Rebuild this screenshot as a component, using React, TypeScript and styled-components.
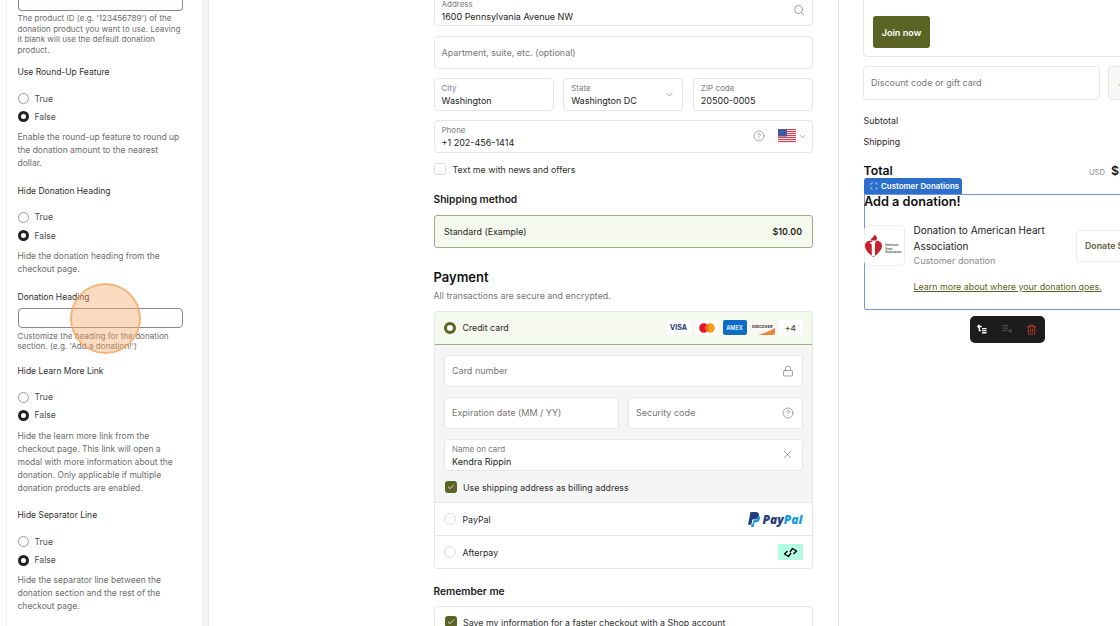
import React from "react";
import styled, { createGlobalStyle } from "styled-components";
import { Check, ChevronDown, CircleHelp, Lock, Scan, Search, Trash2, X } from "lucide-react";

const Colors = {
  olive: "#5a6324",
  tint: "#f5f8ec",
  tintBorder: "#a6a88c",
  line: "#e6e6e6",
  text: "#1f1f1f",
  muted: "#767676",
  blue: "#2c6ecb",
};

const GlobalStyle = createGlobalStyle`
  html, body {
    margin: 0;
    padding: 0;
    height: 100%;
    overflow: hidden;
    background: #fff;
  }
  body {
    font-family: Inter, "Liberation Sans", sans-serif;
    color: ${Colors.text};
  }
  * {
    box-sizing: border-box;
  }
`;

const Page = styled.div`
  position: relative;
  display: flex;
  width: 1120px;
  height: 626px;
  overflow: hidden;
  background: #fff;
`;

/* ---------- left settings panel ---------- */

const Sidebar = styled.aside`
  flex: 0 0 209px;
  height: 626px;
  padding-left: 6px;
  border-right: 1px solid #e8e8e8;
`;

const SidebarScroll = styled.div`
  height: 100%;
  padding-right: 6px;
  background: #f3f3f3;
`;

const SidebarPanel = styled.div`
  height: 100%;
  padding: 0 19.5px 0 10.5px;
  background: #fff;
  border-left: 1px solid #eeeeee;
`;

const Section = styled.section<{ $pad?: number }>`
  padding-bottom: ${(p) => p.$pad ?? 13.75}px;
`;

const SettingLabel = styled.div`
  font-size: 8.5px;
  line-height: 14px;
  color: #303030;
  margin-bottom: 10.5px;
`;

const HeadingLabel = styled(SettingLabel)`
  margin-bottom: 4.5px;
`;

const RadioRow = styled.div`
  display: flex;
  align-items: center;
  gap: 5.5px;
  height: 18.25px;
  font-size: 8.6px;
  color: #4a4a4a;
`;

const RadioDot = styled.span<{ $on?: boolean }>`
  width: 11px;
  height: 11px;
  margin-left: 0.5px;
  border-radius: 50%;
  background: #fff;
  border: ${(p) => (p.$on ? "3px solid #222" : "1px solid #999")};
`;

const Help = styled.p`
  margin: 5px 0 0;
  font-size: 8.5px;
  line-height: 13px;
  color: #6d6d6d;
`;

const SmallHelp = styled.p`
  margin: 2.5px 0 0;
  font-size: 8.1px;
  line-height: 10.5px;
  color: #6d6d6d;
`;

const SettingInput = styled.div<{ $cut?: boolean }>`
  height: ${(p) => (p.$cut ? "10.5px" : "20px")};
  background: #fdfdfd;
  border: 1px solid #8a8a8a;
  border-top-width: ${(p) => (p.$cut ? "0" : "1px")};
  border-radius: ${(p) => (p.$cut ? "0 0 4px 4px" : "4px")};
`;

const CursorHalo = styled.div`
  position: absolute;
  left: 70px;
  top: 283px;
  width: 71px;
  height: 71px;
  border-radius: 50%;
  background: rgba(250, 165, 100, 0.4);
  border: 2px solid rgba(240, 165, 95, 0.7);
`;

const BoolSetting = ({ label, help }: { label: string; help: string }) => (
  <Section>
    <SettingLabel>{label}</SettingLabel>
    <RadioRow>
      <RadioDot />
      True
    </RadioRow>
    <RadioRow>
      <RadioDot $on />
      False
    </RadioRow>
    <Help>{help}</Help>
  </Section>
);

/* ---------- checkout column ---------- */

const Main = styled.main`
  flex: 0 0 630px;
  height: 626px;
  padding: 0 25px 0 224.5px;
  border-right: 1px solid #e8e8e8;
`;

const Stack = styled.div`
  display: flex;
  flex-direction: column;
  margin-top: -6.5px;
`;

const Field = styled.div<{ $h?: number; $grow?: boolean }>`
  display: flex;
  align-items: center;
  justify-content: space-between;
  height: ${(p) => p.$h ?? 32.5}px;
  flex: ${(p) => (p.$grow ? "1 1 0" : "none")};
  min-width: 0;
  padding: 0 7.5px 0 7px;
  background: #fff;
  border: 1px solid ${Colors.line};
  border-radius: 4px;
`;

const FieldText = styled.div`
  display: flex;
  flex-direction: column;
  min-width: 0;
  padding-top: 1.5px;
`;

const FloatLabel = styled.span`
  font-size: 8px;
  line-height: 11px;
  color: #7d7d7d;
`;

const FieldValue = styled.span`
  font-size: 9px;
  line-height: 13px;
  color: #222;
  white-space: nowrap;
`;

const Placeholder = styled.span`
  font-size: 9px;
  color: #767676;
  white-space: nowrap;
`;

const FieldRow = styled.div<{ $mt?: number }>`
  display: flex;
  gap: 9.5px;
  margin-top: ${(p) => p.$mt ?? 9.5}px;
`;

const FieldIcons = styled.div`
  display: flex;
  align-items: center;
  color: #707070;
`;

const PhoneIcons = styled(FieldIcons)`
  margin-right: -2px;
`;

const FlagSlot = styled.span`
  display: flex;
  margin: 0 2px 0 12.5px;
`;

const CheckRow = styled.div<{ $mt: number }>`
  display: flex;
  align-items: center;
  gap: 6.5px;
  height: 14px;
  margin-top: ${(p) => p.$mt}px;
  font-size: 8.85px;
  color: #303030;
  white-space: nowrap;
`;

const CheckBox = styled.span<{ $on?: boolean }>`
  display: flex;
  align-items: center;
  justify-content: center;
  flex: none;
  width: 12px;
  height: 12px;
  margin-left: 0.5px;
  border-radius: 2.5px;
  color: #fff;
  background: ${(p) => (p.$on ? Colors.olive : "#fff")};
  border: 1px solid ${(p) => (p.$on ? Colors.olive : "#dcdcdc")};
`;

const SubHeading = styled.h3<{ $mt: number }>`
  margin: ${(p) => p.$mt}px 0 0;
  font-size: 10.2px;
  line-height: 14px;
  font-weight: 600;
  color: #1a1a1a;
`;

const Heading = styled.h2`
  margin: 20px 0 0;
  font-size: 13px;
  line-height: 18px;
  font-weight: 600;
  color: #111;
`;

const SubText = styled.p`
  margin: 3px 0 0;
  font-size: 8.9px;
  line-height: 14px;
  color: #767676;
`;

const ShipOption = styled.div`
  display: flex;
  align-items: center;
  justify-content: space-between;
  height: 33px;
  margin-top: 9px;
  padding: 0 10px 0 9.5px;
  font-size: 8.9px;
  background: ${Colors.tint};
  border: 1px solid ${Colors.tintBorder};
  border-radius: 3px;
`;

const Price = styled.span`
  font-weight: 600;
`;

const PaymentBox = styled.div`
  margin-top: 8px;
  border: 1px solid ${Colors.line};
  border-radius: 4px;
  overflow: hidden;
`;

const PayRow = styled.div<{ $active?: boolean }>`
  display: flex;
  align-items: center;
  gap: 6.5px;
  height: ${(p) => (p.$active ? "34px" : "33px")};
  padding: 0 9.5px;
  font-size: 8.8px;
  color: #2a2a2a;
  background: ${(p) => (p.$active ? Colors.tint : "#fff")};
  border: ${(p) => (p.$active ? `1px solid ${Colors.tintBorder}` : "none")};
  border-top: ${(p) => (p.$active ? "none" : `1px solid ${Colors.line}`)};
  margin: ${(p) => (p.$active ? "-1px -1px 0" : "0")};
  border-radius: ${(p) => (p.$active ? "3px 3px 0 0" : "0")};
`;

const PayRadio = styled.span<{ $on?: boolean }>`
  flex: none;
  width: 12px;
  height: 12px;
  border-radius: 50%;
  background: #fff;
  border: ${(p) => (p.$on ? `3.5px solid ${Colors.olive}` : "1px solid #dedede")};
`;

const PayName = styled.span`
  flex: 1;
`;

const CardForm = styled.div`
  padding: 9.5px 9.5px 0;
  height: 157px;
  background: #f5f5f5;
`;

const Badges = styled.div`
  display: flex;
  gap: 4px;
`;

const Badge = styled.span<{ $bg?: string }>`
  display: flex;
  align-items: center;
  justify-content: center;
  width: 24px;
  height: 15px;
  overflow: hidden;
  border-radius: 2px;
  background: ${(p) => p.$bg ?? "#fff"};
`;

const BadgeText = styled.span<{ $color: string; $size: number }>`
  font-size: ${(p) => p.$size}px;
  font-weight: 700;
  color: ${(p) => p.$color};
  white-space: nowrap;
`;

const PayPalLogo = styled.span`
  display: flex;
  align-items: center;
  gap: 3px;
`;

const PayPalWord = styled.span`
  font-family: "Open Sans", sans-serif;
  font-size: 12px;
  font-weight: 800;
  font-style: italic;
  color: #253b80;
`;

const PayPalPal = styled.span`
  color: #179bd7;
`;

const AfterpayBadge = styled.span`
  display: flex;
  align-items: center;
  justify-content: center;
  width: 25px;
  height: 16px;
  border-radius: 2px;
  background: #b2fce4;
`;

const RememberBox = styled.div`
  height: 60px;
  margin-top: 8px;
  padding: 8px 9.5px;
  border: 1px solid ${Colors.line};
  border-radius: 4px;
`;

/* ---------- order summary column ---------- */

const Summary = styled.aside`
  flex: none;
  width: 291px;
  margin-left: 24px;
  margin-top: -10px;
`;

const PromoCard = styled.div`
  height: 67px;
  padding: 25px 9px 0;
  border: 1px solid ${Colors.line};
  border-radius: 4px;
`;

const JoinButton = styled.button`
  display: block;
  width: 57px;
  height: 32px;
  padding: 0;
  font: 600 9.1px Inter, sans-serif;
  color: #fff;
  background: ${Colors.olive};
  border: none;
  border-radius: 3px;
`;

const DiscountRow = styled.div`
  display: flex;
  gap: 8px;
  margin-top: 9px;
`;

const DiscountInput = styled(Field)`
  flex: 0 0 237px;
  height: 33.5px;
`;

const ApplyButton = styled.div`
  flex: 1;
  display: flex;
  align-items: center;
  padding-left: 10px;
  font-size: 9px;
  color: #8a8a8a;
  background: #f7f7f7;
  border: 1px solid ${Colors.line};
  border-radius: 4px;
`;

const LineItem = styled.div<{ $mt: number }>`
  display: flex;
  justify-content: space-between;
  height: 14px;
  line-height: 14px;
  margin-top: ${(p) => p.$mt}px;
  padding-left: 0.5px;
  font-size: 8.9px;
  color: #2a2a2a;
`;

const TotalRow = styled.div`
  display: flex;
  align-items: baseline;
  justify-content: space-between;
  height: 14px;
  margin-top: 15px;
  padding-left: 0.5px;
  font-size: 12.3px;
  line-height: 14px;
  font-weight: 600;
  color: #111;
`;

const TotalValue = styled.span`
  display: flex;
  align-items: baseline;
  gap: 6px;
`;

const Currency = styled.span`
  font-size: 7.6px;
  font-weight: 400;
  color: #8a8a8a;
`;

const BlockTab = styled.div`
  display: flex;
  align-items: center;
  gap: 3.5px;
  width: 98px;
  height: 16px;
  margin-left: 1px;
  padding-left: 5.5px;
  font-size: 7.9px;
  font-weight: 600;
  color: #fff;
  white-space: nowrap;
  background: ${Colors.blue};
  border-radius: 3px 3px 0 0;
`;

const DonationBox = styled.div`
  height: 116px;
  margin-left: 1px;
  border: 1.5px solid #6d9ad6;
  border-radius: 0 0 0 2px;
`;

const DonationTitle = styled.h3`
  margin: 0;
  font-size: 12.7px;
  line-height: 13px;
  font-weight: 600;
  color: #111;
  white-space: nowrap;
  margin-left: -1px;
`;

const DonationRow = styled.div`
  display: flex;
  align-items: center;
  gap: 9px;
  margin-top: 16px;
  margin-left: -1.5px;
`;

const LogoFrame = styled.div`
  flex: none;
  width: 41px;
  height: 41px;
  display: flex;
  align-items: center;
  background: #fff;
  border: 1px solid #eeeeee;
  border-radius: 5px;
`;

const DonationInfo = styled.div`
  flex: 0 0 153px;
  margin-top: -2px;
`;

const DonationName = styled.div`
  font-size: 10px;
  line-height: 16px;
  color: #222;
`;

const DonationMeta = styled.div`
  font-size: 9.1px;
  line-height: 14px;
  color: #8a8a8a;
`;

const DonateButton = styled.div`
  flex: none;
  width: 90px;
  height: 32px;
  display: flex;
  align-items: center;
  padding-left: 8.5px;
  font-size: 8.8px;
  font-weight: 600;
  color: #5d6342;
  background: #fff;
  border: 1px solid #ececec;
  border-radius: 3px;
  white-space: nowrap;
`;

const LearnMore = styled.a`
  display: block;
  margin: 12.5px 0 0 48.5px;
  font-size: 8.85px;
  line-height: 13px;
  color: ${Colors.olive};
  text-decoration: underline;
  white-space: nowrap;
`;

const Toolbar = styled.div`
  display: flex;
  align-items: center;
  justify-content: center;
  gap: 14.5px;
  width: 75px;
  height: 27px;
  margin: 6px 0 0 106.5px;
  background: #1c1c1c;
  border-radius: 5px;
`;

/* ---------- drawings ---------- */

const FlagIcon = () => (
  <svg width="18" height="14" viewBox="0 0 18 14">
    {[0, 1, 2, 3, 4, 5, 6].map((i) => (
      <rect key={i} y={i * 2} width="18" height="1" fill="#d9414f" />
    ))}
    {[0, 1, 2, 3, 4, 5, 6].map((i) => (
      <rect key={i} y={i * 2 + 1} width="18" height="1" fill="#f6e4e6" />
    ))}
    <rect width="9" height="7.5" fill="#3f5a9c" />
  </svg>
);

const MastercardIcon = () => (
  <svg width="16" height="10" viewBox="0 0 16 10">
    <circle cx="5" cy="5" r="4.8" fill="#e0162b" />
    <circle cx="11" cy="5" r="4.8" fill="#f79e1b" />
    <path d="M8 1.3a4.8 4.8 0 0 1 0 7.4a4.8 4.8 0 0 1 0-7.4z" fill="#f2641f" />
  </svg>
);

const DiscoverBadge = () => (
  <Badge>
    <svg width="24" height="15" viewBox="0 0 24 15">
      <rect width="24" height="15" fill="#fbf7f2" />
      <path d="M7 15C14 13 20 10.5 24 8v7z" fill="#e8853a" />
      <text x="1" y="7.5" fontSize="4" fontWeight="700" fill="#3a3433" fontFamily="Inter, sans-serif">
        DISCOVER
      </text>
    </svg>
  </Badge>
);

const PayPalMark = () => (
  <svg width="12" height="15" viewBox="0 0 12 15">
    <path d="M2.5 0h5C10.3 0 11.4 1.6 11 3.6 10.5 6.4 8.6 7.6 6 7.6H4.3l-.9 5.2H0z" fill="#253b80" />
    <path d="M10.6 3.6c1.2.7 1.6 1.9 1.3 3.3-.5 2.4-2.1 3.4-4.3 3.4h-1l-.8 4.7H3l.4-2.2h1l.9-4.6H6c2.8 0 4.3-1.9 4.6-4.6z" fill="#179bd7" />
  </svg>
);

const AfterpayMark = () => (
  <svg width="15" height="13" viewBox="0 0 15 13" fill="none" stroke="#000" strokeWidth="1.4" strokeLinejoin="round">
    <path d="M7 6 9.5 2.5 13.5 5 10.5 8" />
    <path d="M8 7 5.5 10.5 1.5 8 4.5 5" />
  </svg>
);

const HeartLogo = () => (
  <svg width="39" height="24" viewBox="0 0 39 24">
    <g transform="scale(1.13 1)">
      <path d="M7.5 23C3 19.5 0 16 0 11.8 0 8.8 2.3 6.8 4.6 6.8c1.4 0 2.4.6 2.9 1.5.6-.9 1.6-1.5 3-1.5 2.4 0 4.5 2 4.5 5 0 4.2-3 7.7-7.5 11.2z" fill="#c8202f" />
      <path d="M6 22V10.5L3.8 8.4l6-1.4-1 3.2V22z" fill="#fff" />
      <path d="M5 6.5C5 4 8 3.5 8.5 0.5c2 2 3 4 1.2 6z" fill="#c8202f" />
    </g>
    <text x="20" y="12" fontSize="2.9" fontWeight="600" fill="#444" fontFamily="Inter, sans-serif">American</text>
    <text x="20" y="15.5" fontSize="2.9" fontWeight="600" fill="#444" fontFamily="Inter, sans-serif">Heart</text>
    <text x="20" y="19" fontSize="2.9" fontWeight="600" fill="#444" fontFamily="Inter, sans-serif">Association</text>
  </svg>
);

const MoveUpIcon = ({ color }: { color: string }) => (
  <svg width="10" height="10" viewBox="0 0 12 12" fill="none" stroke={color} strokeWidth="1.6">
    <path d="M0.8 3h5M3 0.8 0.8 3 3 5.2" />
    <path d="M2.8 3v5h2M6 5.5h5.5M6 8h5.5M6 10.5h5.5" />
  </svg>
);

const MoveDownIcon = ({ color }: { color: string }) => (
  <svg width="10" height="10" viewBox="0 0 12 12" fill="none" stroke={color} strokeWidth="1.6">
    <path d="M0.5 2h7M0.5 5h7M0.5 8h5M7 8h4.5M9.5 5.8 11.5 8 9.5 10.2" />
  </svg>
);

export default function App() {
  return (
    <Page>
      <GlobalStyle />
      <Sidebar>
        <SidebarScroll>
          <SidebarPanel>
            <Section $pad={10}>
              <SettingInput $cut />
              <SmallHelp>
                The product ID (e.g. '123456789') of the donation product you want to use. Leaving it blank will use the default donation product.
              </SmallHelp>
            </Section>
            <BoolSetting
              label="Use Round-Up Feature"
              help="Enable the round-up feature to round up the donation amount to the nearest dollar."
            />
            <BoolSetting label="Hide Donation Heading" help="Hide the donation heading from the checkout page." />
            <Section $pad={12}>
              <HeadingLabel>Donation Heading</HeadingLabel>
              <SettingInput />
              <SmallHelp>Customize the heading for the donation section. (e.g. 'Add a donation!')</SmallHelp>
            </Section>
            <BoolSetting
              label="Hide Learn More Link"
              help="Hide the learn more link from the checkout page. This link will open a modal with more information about the donation. Only applicable if multiple donation products are enabled."
            />
            <BoolSetting
              label="Hide Separator Line"
              help="Hide the separator line between the donation section and the rest of the checkout page."
            />
          </SidebarPanel>
        </SidebarScroll>
      </Sidebar>

      <Main>
        <Stack>
          <Field>
            <FieldText>
              <FloatLabel>Address</FloatLabel>
              <FieldValue>1600 Pennsylvania Avenue NW</FieldValue>
            </FieldText>
            <FieldIcons>
              <Search size={12} strokeWidth={1.4} />
            </FieldIcons>
          </Field>
          <FieldRow $mt={10}>
            <Field $grow>
              <Placeholder>Apartment, suite, etc. (optional)</Placeholder>
            </Field>
          </FieldRow>
          <FieldRow>
            <Field $grow>
              <FieldText>
                <FloatLabel>City</FloatLabel>
                <FieldValue>Washington</FieldValue>
              </FieldText>
            </Field>
            <Field $grow>
              <FieldText>
                <FloatLabel>State</FloatLabel>
                <FieldValue>Washington DC</FieldValue>
              </FieldText>
              <FieldIcons>
                <ChevronDown size={11} strokeWidth={1.4} />
              </FieldIcons>
            </Field>
            <Field $grow>
              <FieldText>
                <FloatLabel>ZIP code</FloatLabel>
                <FieldValue>20500-0005</FieldValue>
              </FieldText>
            </Field>
          </FieldRow>
          <FieldRow>
            <Field $grow>
              <FieldText>
                <FloatLabel>Phone</FloatLabel>
                <FieldValue>+1 202-456-1414</FieldValue>
              </FieldText>
              <PhoneIcons>
                <CircleHelp size={12} strokeWidth={1.2} />
                <FlagSlot>
                  <FlagIcon />
                </FlagSlot>
                <ChevronDown size={9} strokeWidth={1.4} />
              </PhoneIcons>
            </Field>
          </FieldRow>
          <CheckRow $mt={9.5}>
            <CheckBox />
            Text me with news and offers
          </CheckRow>
          <SubHeading $mt={16}>Shipping method</SubHeading>
          <ShipOption>
            <span>Standard (Example)</span>
            <Price>$10.00</Price>
          </ShipOption>
          <Heading>Payment</Heading>
          <SubText>All transactions are secure and encrypted.</SubText>
          <PaymentBox>
            <PayRow $active>
              <PayRadio $on />
              <PayName>Credit card</PayName>
              <Badges>
                <Badge>
                  <BadgeText $color="#26337a" $size={7}>VISA</BadgeText>
                </Badge>
                <Badge>
                  <MastercardIcon />
                </Badge>
                <Badge $bg="#0f6cc4">
                  <BadgeText $color="#d8ecff" $size={5.5}>AMEX</BadgeText>
                </Badge>
                <DiscoverBadge />
                <Badge>
                  <BadgeText $color="#5f6648" $size={8}>+4</BadgeText>
                </Badge>
              </Badges>
            </PayRow>
            <CardForm>
              <Field>
                <Placeholder>Card number</Placeholder>
                <FieldIcons>
                  <Lock size={12} strokeWidth={1.3} />
                </FieldIcons>
              </Field>
              <FieldRow>
                <Field $grow>
                  <Placeholder>Expiration date (MM / YY)</Placeholder>
                </Field>
                <Field $grow>
                  <Placeholder>Security code</Placeholder>
                  <FieldIcons>
                    <CircleHelp size={12} strokeWidth={1.2} />
                  </FieldIcons>
                </Field>
              </FieldRow>
              <FieldRow>
                <Field $grow>
                  <FieldText>
                    <FloatLabel>Name on card</FloatLabel>
                    <FieldValue>Kendra Rippin</FieldValue>
                  </FieldText>
                  <FieldIcons>
                    <X size={13} strokeWidth={1.2} />
                  </FieldIcons>
                </Field>
              </FieldRow>
              <CheckRow $mt={9}>
                <CheckBox $on>
                  <Check size={8} strokeWidth={2.5} />
                </CheckBox>
                Use shipping address as billing address
              </CheckRow>
            </CardForm>
            <PayRow>
              <PayRadio />
              <PayName>PayPal</PayName>
              <PayPalLogo>
                <PayPalMark />
                <PayPalWord>
                  Pay<PayPalPal>Pal</PayPalPal>
                </PayPalWord>
              </PayPalLogo>
            </PayRow>
            <PayRow>
              <PayRadio />
              <PayName>Afterpay</PayName>
              <AfterpayBadge>
                <AfterpayMark />
              </AfterpayBadge>
            </PayRow>
          </PaymentBox>
          <SubHeading $mt={15}>Remember me</SubHeading>
          <RememberBox>
            <CheckRow $mt={0}>
              <CheckBox $on>
                <Check size={8} strokeWidth={2.5} />
              </CheckBox>
              Save my information for a faster checkout with a Shop account
            </CheckRow>
          </RememberBox>
        </Stack>
      </Main>

      <Summary>
        <PromoCard>
          <JoinButton>Join now</JoinButton>
        </PromoCard>
        <DiscountRow>
          <DiscountInput>
            <Placeholder>Discount code or gift card</Placeholder>
          </DiscountInput>
          <ApplyButton>Apply</ApplyButton>
        </DiscountRow>
        <LineItem $mt={14}>
          <span>Subtotal</span>
          <span>$49.00</span>
        </LineItem>
        <LineItem $mt={7}>
          <span>Shipping</span>
          <span>$10.00</span>
        </LineItem>
        <TotalRow>
          <span>Total</span>
          <TotalValue>
            <Currency>USD</Currency>
            $59.00
          </TotalValue>
        </TotalRow>
        <BlockTab>
          <Scan size={8} strokeWidth={2} />
          Customer Donations
        </BlockTab>
        <DonationBox>
          <DonationTitle>Add a donation!</DonationTitle>
          <DonationRow>
            <LogoFrame>
              <HeartLogo />
            </LogoFrame>
            <DonationInfo>
              <DonationName>Donation to American Heart Association</DonationName>
              <DonationMeta>Customer donation</DonationMeta>
            </DonationInfo>
            <DonateButton>Donate $5</DonateButton>
          </DonationRow>
          <LearnMore>Learn more about where your donation goes.</LearnMore>
        </DonationBox>
        <Toolbar>
          <MoveUpIcon color="#f2f2f2" />
          <MoveDownIcon color="#4a4a4a" />
          <Trash2 size={11} color="#d8402f" strokeWidth={1.8} />
        </Toolbar>
      </Summary>

      <CursorHalo />
    </Page>
  );
}
